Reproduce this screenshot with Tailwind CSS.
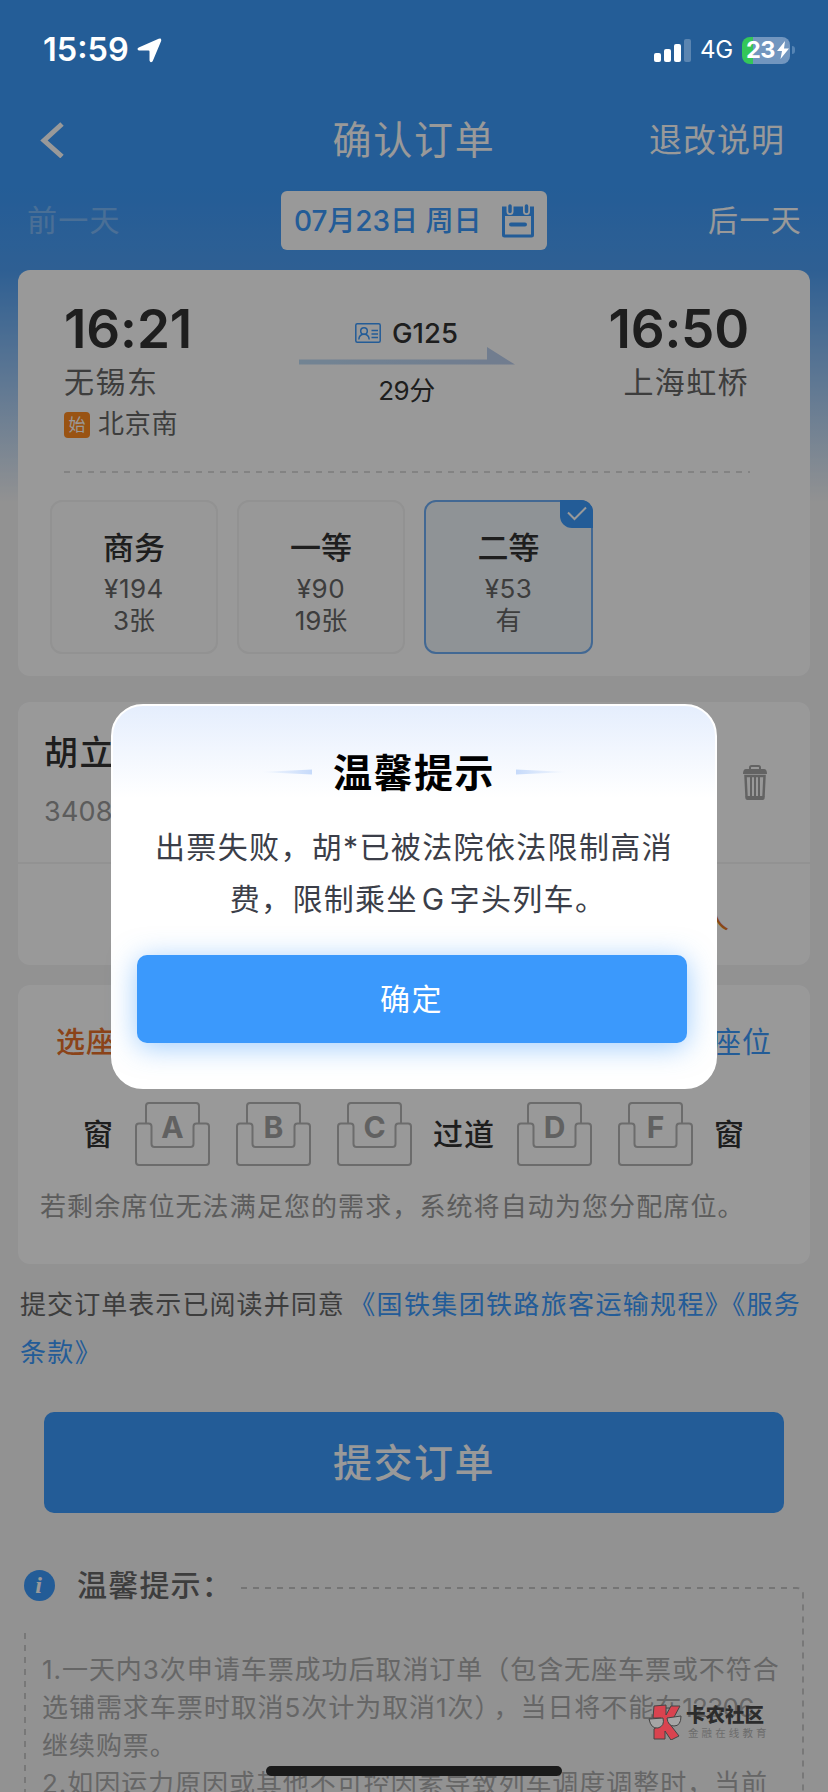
<!DOCTYPE html>
<html lang="zh-CN">
<head>
<meta charset="utf-8">
<title>确认订单</title>
<script src="https://cdn.jsdelivr.net/npm/@tailwindcss/browser@4"></script>
</head>
<body class="font-['Inter','Noto_Sans_CJK_SC',sans-serif]">
<div class="relative flex h-[1792px] w-[828px] flex-col overflow-hidden bg-[linear-gradient(to_bottom,#3c9bfc_0px,#3c9bfc_185px,#4e9ff6_270px,#f3f3f4_502px)] whitespace-nowrap">

  <!-- nav bar -->
  <header class="mt-[100px] flex h-20 shrink-0 items-center px-10">
    <div class="w-[200px]">
      <svg class="h-9 w-6" viewBox="0 0 24 36" fill="none" stroke="#fff" stroke-width="5"><path d="M22 2 L4 18.500 L22 34.500"/></svg>
    </div>
    <h1 class="flex-1 pb-0.5 text-center text-[39px] leading-none tracking-[1.700px] text-white">确认订单</h1>
    <div class="w-[200px] pr-[3px] text-right text-[33px] leading-none tracking-[1px] text-white">退改说明</div>
  </header>

  <!-- date switcher -->
  <div class="mt-[11px] flex h-[59px] shrink-0 items-center justify-between px-[26px] text-[30px] leading-none tracking-[1.300px] text-white">
    <span class="w-[254px] pb-0.5 pl-px opacity-30">前一天</span>
    <div class="flex h-[59px] w-[266px] items-center justify-between rounded-md bg-white pr-3 pl-[13px] text-[28px] tracking-[-0.050px] text-[#3b99fc]">
      <span class="font-medium">07月23日 周日</span>
      <svg class="size-[34px]" viewBox="0 0 34 34" fill="none"><path d="M2.500 4h29v27a1 1 0 0 1-1 1h-27a1 1 0 0 1-1-1z" stroke="#3b99fc" stroke-width="3"/><path d="M1 3h32v9H1z" fill="#3b99fc"/><path d="M9 2v5.500M25.500 2v5.500" stroke="#fff" stroke-width="7" stroke-linecap="round"/><path d="M9 2v5.500M25.500 2v5.500" stroke="#3b99fc" stroke-width="3.500" stroke-linecap="round"/><path d="M10 20.500h14" stroke="#3b99fc" stroke-width="4" stroke-linecap="round"/></svg>
    </div>
    <span class="w-[254px] pb-0.5 text-right">后一天</span>
  </div>

  <!-- train card -->
  <section class="mx-[18px] mt-5 h-[406px] shrink-0 rounded-xl bg-white">
    <div class="mr-[61px] ml-[46px] flex h-[201px] justify-between pt-9 text-[#333]">
      <div class="w-[200px]">
        <div class="text-[53px] leading-[46px] font-semibold tracking-[-0.100px]">16:21</div>
        <div class="mt-3 text-[30px] leading-9 tracking-[1.500px] text-[#666]">无锡东</div>
        <div class="mt-2 flex items-center gap-2 text-[26px] leading-8 tracking-[0.800px] text-[#666]">
          <span class="mt-0.5 flex size-[26px] items-center justify-center rounded bg-[#ff8a20] text-[17px] leading-none tracking-normal text-white">始</span>北京南
        </div>
      </div>
      <div class="w-[220px] pt-[11px]">
        <div class="flex h-8 items-center justify-center gap-[11px] text-[27.500px] leading-8 font-medium">
          <svg class="h-5 w-[26px]" viewBox="0 0 26 20" fill="none" stroke="#3b99fc" stroke-width="1.500"><rect x=".8" y=".8" width="24.400" height="18.400" rx="1.500"/><circle cx="9" cy="8" r="3.300"/><path d="M3.800 16.500c.3-3.500 2.400-5.200 5.200-5.200s4.900 1.700 5.200 5.200M16.500 7.500h6.500M16.500 11h6.500M16.500 14.500h6.500"/></svg>
          G125
        </div>
        <svg class="-mt-0.5 ml-0.5 h-[18px] w-[216px]" viewBox="0 0 216 18"><defs><linearGradient id="arrow"><stop offset="0" stop-color="#bfdcf6"/><stop offset="1" stop-color="#bccfee"/></linearGradient></defs><path d="M0 12.500h188V0l28 17.500H0z" fill="url(#arrow)"/></svg>
        <div class="mt-2.5 text-center text-[26px] leading-8 tracking-[-0.500px]">29分</div>
      </div>
      <div class="w-[200px] text-right">
        <div class="text-[53px] leading-[46px] font-semibold tracking-[-0.200px]">16:50</div>
        <div class="mt-3 text-[30px] leading-9 tracking-[1.400px] text-[#666]">上海虹桥</div>
      </div>
    </div>
    <div class="mr-[60px] ml-[46px] h-0.5 bg-[repeating-linear-gradient(to_right,#dadada_0_6px,transparent_6px_12px)]"></div>

    <!-- seat classes -->
    <div class="mt-[27px] ml-8 flex gap-[19px] text-center text-[26px] leading-8 text-[#666]">
      <div class="h-[154px] w-[168px] rounded-xl border-2 border-[#f3f3f3] bg-[#fdfdfd] pt-[26px]">
        <div class="mb-[5px] text-[31px] leading-10 font-medium text-[#333]">商务</div><div class="tracking-[0.500px]">¥194</div><div>3张</div>
      </div>
      <div class="h-[154px] w-[168px] rounded-xl border-2 border-[#f3f3f3] bg-[#fdfdfd] pt-[26px]">
        <div class="mb-[5px] text-[31px] leading-10 font-medium text-[#333]">一等</div><div class="tracking-[0.500px]">¥90</div><div>19张</div>
      </div>
      <div class="relative h-[154px] w-[169px] rounded-xl border-2 border-[#6eaef6] bg-[#eff5fa] pt-[26px]">
        <div class="mb-[5px] text-[31px] leading-10 font-medium text-[#333]">二等</div><div class="tracking-[0.500px]">¥53</div><div>有</div>
        <div class="absolute -top-0.5 -right-0.5 flex h-7 w-[33px] items-center justify-center rounded-tr-xl rounded-bl-xl bg-[#3b99fc]">
          <svg class="h-4 w-5" viewBox="0 0 20 16" fill="none" stroke="#fff" stroke-width="2"><path d="M1 6.500 L7.500 13 L19 1.500"/></svg>
        </div>
      </div>
    </div>
  </section>

  <!-- passenger card -->
  <section class="mx-[18px] mt-[26px] h-[263px] shrink-0 rounded-xl bg-white">
    <div class="flex h-[162px] items-center justify-between border-b-2 border-[#f3f3f4] pr-[43px] pl-[26px]">
      <div>
        <div class="-mt-1 text-[34px] leading-10 font-medium tracking-[1.500px] text-[#333]">胡立</div>
        <div class="mt-[21px] -mb-0.5 text-[27px] leading-9 tracking-[0.200px] text-[#999]">3408</div>
      </div>
      <svg class="h-[35px] w-6" viewBox="0 0 24 35" fill="none"><path d="M7 4.500V2.500q0-1.500 1.500-1.500h7Q17 1 17 2.500v2" stroke="#a6a6a6" stroke-width="2"/><path d="M3 4h18q3 0 3 5H0q0-5 3-5z" fill="#a6a6a6"/><path d="M2.500 11h19l-1 20.500q-.2 2-2 2h-13q-1.800 0-2-2z" stroke="#a6a6a6" stroke-width="2.500"/><path d="M2.500 31h19v3q-1 1-2 1h-15q-1 0-2-1z" fill="#a6a6a6"/><path d="M8 11v21M12 11v21M16 11v21" stroke="#a6a6a6" stroke-width="2"/></svg>
    </div>
    <div class="flex h-[102px] items-center justify-end pt-1 pr-[81px] text-[30px] leading-none text-[#e57a26]">选择乘车人</div>
  </section>

  <!-- seat picker card -->
  <section class="mx-[18px] mt-5 h-[279px] shrink-0 rounded-xl bg-white">
    <div class="flex h-[114px] items-center justify-between pr-[38px] pl-[38px] text-[29px] leading-none">
      <span class="font-medium tracking-[1px] text-[#e8702a]">选座服务</span>
      <span class="tracking-[1px] text-[#3b99fc]">选择座位</span>
    </div>
    <svg class="hidden"><symbol id="seat" viewBox="0 0 75 64"><path d="M11 21.500V4q0-3 3-3h47q3 0 3 3v17.500M11 21.500H4q-3 0-3 3V60q0 3 3 3h67q3 0 3-3V24.500q0-3-3-3h-9.500q-3 0-3 3V42q0 3-3 3H19.500q-3 0-3-3V24.500q0-3-3-3z" fill="none" stroke="#b4b4b4" stroke-width="2"/></symbol></svg>
    <div class="flex h-[68px] items-center pt-0.5 pl-[65px] text-[30px] leading-none font-medium text-[#333]">
      <span class="w-[52px]">窗</span>
      <div class="grid h-16 w-[101px]"><svg class="col-start-1 row-start-1 h-16 w-[75px]"><use href="#seat"/></svg><b class="col-start-1 row-start-1 w-[75px] pt-[11px] text-center text-[30px] leading-7 font-bold text-[#a2a2a2]">A</b></div>
      <div class="grid h-16 w-[101px]"><svg class="col-start-1 row-start-1 h-16 w-[75px]"><use href="#seat"/></svg><b class="col-start-1 row-start-1 w-[75px] pt-[11px] text-center text-[30px] leading-7 font-bold text-[#a2a2a2]">B</b></div>
      <div class="grid h-16 w-[96px]"><svg class="col-start-1 row-start-1 h-16 w-[75px]"><use href="#seat"/></svg><b class="col-start-1 row-start-1 w-[75px] pt-[11px] text-center text-[30px] leading-7 font-bold text-[#a2a2a2]">C</b></div>
      <span class="w-[84px] tracking-[1px]">过道</span>
      <div class="grid h-16 w-[101px]"><svg class="col-start-1 row-start-1 h-16 w-[75px]"><use href="#seat"/></svg><b class="col-start-1 row-start-1 w-[75px] pt-[11px] text-center text-[30px] leading-7 font-bold text-[#a2a2a2]">D</b></div>
      <div class="grid h-16 w-[96px]"><svg class="col-start-1 row-start-1 h-16 w-[75px]"><use href="#seat"/></svg><b class="col-start-1 row-start-1 w-[75px] pt-[11px] text-center text-[30px] leading-7 font-bold text-[#a2a2a2]">F</b></div>
      <span>窗</span>
    </div>
    <p class="mt-5 ml-[22px] text-[26px] leading-10 tracking-[1.100px] text-[#999]">若剩余席位无法满足您的需求，系统将自动为您分配席位。</p>
  </section>

  <!-- agreement -->
  <p class="mt-[17px] h-24 shrink-0 pl-5 text-[26px] leading-[48px] tracking-[1.070px] text-[#666]">提交订单表示已阅读并同意 <span class="-ml-1 tracking-[1.350px] text-[#3b99fc]">《国铁集团铁路旅客运输规程》《服务<br>条款》</span></p>

  <button class="mx-11 mt-[35px] h-[101px] shrink-0 rounded-[10px] bg-[#3b99fc] text-[39px] leading-none font-medium tracking-[1.500px] text-white">提交订单</button>

  <!-- notice -->
  <section class="relative mt-[52px] h-60 shrink-0">
    <div class="flex h-10 items-center pl-6">
      <span class="flex size-[31px] items-center justify-center rounded-full bg-[#3b99fc] pr-0.5 font-['Liberation_Serif',serif] text-[24px] leading-none font-bold text-white italic">i</span>
      <span class="ml-[22px] w-[163px] text-[30px] leading-none font-medium tracking-[1.200px] text-[#666]">温馨提示：</span>
    </div>
    <svg class="absolute top-0 left-0 h-60 w-[828px]" fill="none" stroke="#c4c4c4" stroke-width="1.800" stroke-dasharray="6 6"><path d="M241 23H797q6 0 6 6V240M25 68V240"/></svg>
    <p class="mt-[46px] ml-[42px] text-[26px] leading-[38px] tracking-[0.950px] text-[#aaa]">1.一天内3次申请车票成功后取消订单（包含无座车票或不符合<br>选铺需求车票时取消5次计为取消1次）<span class="ml-[5px]">，</span>当日将不能在<span class="tracking-[-0.700px]">12306</span><br>继续购票。<br>2.如因运力原因或其他不可控因素导致列车调度调整时，当前</p>
  </section>

  <!-- dimming layer with the system bars and the dialog over it -->
  <div class="absolute inset-0 bg-black/40">
    <div class="flex h-[100px] items-center pr-[33px] pl-[43px] text-white">
      <span class="w-[94px] text-[32.500px] leading-none font-semibold">15:59</span>
      <svg class="size-[25px]" viewBox="0 0 26 26" fill="#fff"><path d="M22.500.8 1.800 9.800Q-.8 11.500 1.800 13H12q1 0 1 1v9.500q1 3.200 3.300.6L25 3.500Q26-.5 22.500.8z"/></svg>
      <div class="ml-auto flex items-center">
        <svg class="h-6 w-[37px]" viewBox="0 0 37 24" fill="#fff"><rect y="15" width="7" height="9" rx="2"/><rect x="10" y="11" width="7" height="13" rx="2"/><rect x="20" y="6" width="7" height="18" rx="2"/><rect x="30" y="1" width="7" height="23" rx="2" opacity=".25"/></svg>
        <span class="ml-[9px] w-[42px] text-[24px] leading-none tracking-[-0.300px]">4G</span>
        <div class="flex h-[27px] w-12 items-center gap-0.5 rounded-lg bg-[linear-gradient(to_right,#34c759_11px,#7296bf_11px)] pl-1 text-[23.500px] leading-none font-bold tracking-[-0.600px]">23<svg class="h-[18px] w-3" viewBox="0 0 12 18" fill="#fff"><path d="M8 0 0 10h5L3.500 18 12 7.500H7z"/></svg></div>
        <div class="ml-0.5 h-2 w-[3px] rounded-r-full bg-[#5584b4]"></div>
      </div>
    </div>
  </div>

  <div class="absolute top-[704px] left-[111px] flex h-[385px] w-[606px] flex-col items-center rounded-[32px] border-2 border-white bg-[linear-gradient(to_bottom,#e5eefd_0px,#fff_92px)]">
    <div class="mt-[42px] flex h-12 items-center gap-[21px]">
      <svg class="h-1.5 w-[52px]" viewBox="0 0 52 6"><defs><linearGradient id="dash"><stop offset="0" stop-color="#c6dafa" stop-opacity="0"/><stop offset="1" stop-color="#c6dafa"/></linearGradient></defs><path d="M0 3 52 .5v5z" fill="url(#dash)"/></svg>
      <h2 class="text-[39px] leading-none font-bold tracking-[1.500px] text-black">温馨提示</h2>
      <svg class="h-1.5 w-[52px] rotate-180" viewBox="0 0 52 6"><path d="M0 3 52 .5v5z" fill="url(#dash)"/></svg>
    </div>
    <p class="mt-[25px] text-center text-[30px] leading-[52px] tracking-[1.350px] text-[#3b3e48]">出票失败，胡*已被法院依法限制高消<br><span class="pl-2">费，限制乘坐<span class="mx-1">G</span>字头列车。</span></p>
    <button class="mt-[30px] mr-[5px] h-[88px] w-[550px] shrink-0 rounded-[10px] bg-[#3b99fc] text-[30px] leading-none tracking-[1.500px] text-white shadow-[0_4px_28px_rgba(59,153,252,0.5)]">确定</button>
  </div>

  <!-- community watermark -->
  <div class="absolute top-[1704px] left-[648px] flex items-start">
    <svg class="h-9 w-[34px]" viewBox="0 0 34 36" stroke="#444" stroke-width="1"><path d="M6 2 18 1V11L23 2H32L25 15 21 19 31 32 23 36 17 27V35H6V25Q14 20 13 14H5z" fill="#d9434f"/><path d="M1 15 15 14Q17 22 10 24 3 25 1 15zM19 14 33 12Q33 22 26 22 20 22 19 14z" fill="#a5a5a5"/></svg>
    <div class="ml-1 flex flex-col">
      <span class="text-[19.500px] leading-[22px] font-black text-[#2c2c2c]">卡农社区</span>
      <span class="mt-0.5 pl-0.5 text-[10.500px] leading-3 tracking-[3.100px] text-[#6c6c6c]">金融在线教育</span>
    </div>
  </div>

  <div class="absolute bottom-[16px] left-[266px] h-2.5 w-[296px] rounded-full bg-[#1a1a1a]"></div>
</div>
</body>
</html>
